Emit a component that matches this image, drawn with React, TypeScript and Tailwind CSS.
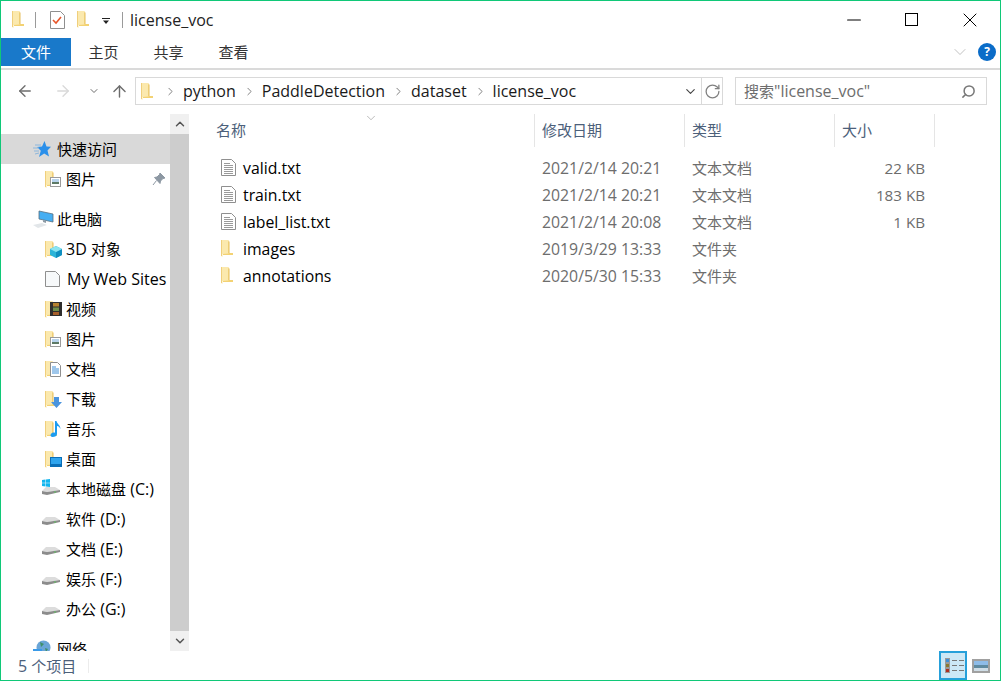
import { ArrowLeft, ArrowRight, ArrowUp, ChevronDown, ChevronRight, ChevronUp, RotateCw, Search, Minus, X } from 'lucide-react'

const font = { fontFamily: '"Open Sans", "Noto Sans CJK SC", sans-serif' }

// CJK runs look smaller than latin in the reference, so they get their own size
const Mixed = ({ text }: { text: string }) => (
  <>
    {text.split(/([\u4e00-\u9fff]+)/).filter(Boolean).map((part, i) => (
      <span key={i} className={/[\u4e00-\u9fff]/.test(part) ? 'text-[15px]' : 'text-[16px]'}>{part}</span>
    ))}
  </>
)

const FolderIcon = ({ className = '' }: { className?: string }) => (
  <svg width="12" height="17" viewBox="0 0 12 17" className={className}>
    <path d="M1 0h6l1 1.500V13h4v2H2z" fill="#f3d273" />
    <path d="M0 0h7.500v13.500L1.500 14 1.500 17 0 16z" fill="#fbe9ae" />
    <path d="M0 0h1v16H0z" fill="#f0cf7c" />
    <path d="M7.500 1.500h1V13h-1z" fill="#e6bd5c" />
  </svg>
)

const TextFileIcon = () => (
  <svg width="15" height="17" viewBox="0 0 15 17">
    <path d="M.5.500h10l4 4v12H.5z" fill="#fff" stroke="#8f8f8f" />
    <path d="M3 4.500h6M3 6.500h9M3 8.500h9M3 10.500h9M3 12.500h9M3 14.500h9" stroke="#9a9a9a" />
  </svg>
)

const Overlay = ({ type }: { type: string }) => {
  if (type === 'pictures')
    return (
      <svg width="11" height="10" viewBox="0 0 11 10" className="absolute left-[5px] top-[6px]">
        <rect x=".5" y=".5" width="10" height="9" fill="#fff" stroke="#9b9b9b" />
        <rect x="2" y="2" width="7" height="3" fill="#b9d4ee" />
        <rect x="2" y="5" width="7" height="2" fill="#5d7a66" />
      </svg>
    )
  if (type === 'video')
    return (
      <svg width="12" height="14" viewBox="0 0 12 14" className="absolute left-[5px] top-[1px]">
        <rect width="12" height="14" fill="#2e2e2e" />
        <rect x="3" y="1" width="6" height="3.500" fill="#b5812f" />
        <rect x="3" y="5.500" width="6" height="3.500" fill="#6f8f4a" />
        <rect x="3" y="10" width="6" height="3" fill="#a65f2b" />
      </svg>
    )
  if (type === 'docs')
    return (
      <svg width="11" height="15" viewBox="0 0 11 15" className="absolute left-[5px] top-[1px]">
        <path d="M.5.500h7l3 3v11H.5z" fill="#fff" stroke="#8f8f8f" />
        <path d="M2 5h4M2 7h7M2 9h7M2 11h7" stroke="#3f8fd8" />
      </svg>
    )
  if (type === 'download')
    return (
      <svg width="11" height="11" viewBox="0 0 11 11" className="absolute left-[6px] top-[6px]">
        <path d="M3 0h5v5h3l-5.500 6L0 5h3z" fill="#4a94de" />
      </svg>
    )
  if (type === 'music')
    return (
      <svg width="11" height="16" viewBox="0 0 11 16" className="absolute left-[5px] top-0">
        <path d="M5 0h1.500c.5 3 4 4 4 8-1-2-2-3-3.500-3v8c0 2-2 3-4.500 3C0 16 0 13 2 12c1-.5 2-.5 3-.2z" fill="#1c9cf0" />
      </svg>
    )
  if (type === 'desktop')
    return (
      <svg width="12" height="10" viewBox="0 0 12 10" className="absolute left-[5px] top-[6px]">
        <rect width="12" height="10" fill="#0a6fb8" />
        <rect x="1" y="1" width="10" height="6" fill="#2ea4ee" />
      </svg>
    )
  if (type === '3d')
    return (
      <svg width="12" height="12" viewBox="0 0 12 12" className="absolute left-[5px] top-[5px]">
        <path d="M6 0l6 3v6l-6 3-6-3V3z" fill="#2bb4d8" />
        <path d="M6 6l6-3v6l-6 3z" fill="#0f8fc0" />
        <path d="M6 0l6 3-6 3-6-3z" fill="#8be4f0" />
      </svg>
    )
  return null
}

const DriveIcon = ({ win = false }: { win?: boolean }) => (
  <span className="relative block h-4 w-[18px]">
    {win && (
      <svg width="8" height="8" viewBox="0 0 8 8" className="absolute -top-[2px] left-0">
        <path d="M0 1l3.500-.5V3.700H0zM4 .4L8 0v3.700H4zM0 4.200h3.500v3.300L0 7zM4 4.200h4V8l-4-.5z" fill="#12b5ee" />
      </svg>
    )}
    <svg width="18" height="10" viewBox="0 0 18 10" className="absolute left-0 top-[5px]">
      <path d="M0 5l4-4h9l5 3-13 2z" fill="#dcdcdc" />
      <path d="M0 5l5 1 13-2v2L5 9 0 8z" fill="#8c8c8c" />
      <rect x="12" y="5.500" width="2" height="1" fill="#5cbf5c" />
    </svg>
  </span>
)

const NavRow = ({ label, indent = 44, gap = 'ml-[5px]', icon, selected = false, pin = false }: { label: string; indent?: number; gap?: string; icon: React.ReactNode; selected?: boolean; pin?: boolean }) => (
  <div className={`relative flex h-[30px] items-center ${selected ? 'bg-[#d9d9d9]' : ''}`} style={{ paddingLeft: indent }}>
    <span className="relative flex h-4 w-[17px] shrink-0 items-center">{icon}</span>
    <span className={`whitespace-nowrap text-black ${gap}`}><Mixed text={label} /></span>
    {pin && (
      <svg width="14" height="14" viewBox="0 0 14 14" className="absolute left-[151px] top-[8px]">
        <path d="M8 1l5 5-2 .5-2.500 2.500-.5 2.500L2.500 5.500 5 5l2.500-2.500zM4.500 8.500L1 13" fill="#8d98a3" stroke="#8d98a3" />
      </svg>
    )}
  </div>
)

const LibRow = ({ label, type, pin }: { label: string; type: string; pin?: boolean }) => (
  <NavRow label={label} pin={pin} gap="ml-[4px]" icon={<><FolderIcon /><Overlay type={type} /></>} />
)

const DriveRow = ({ label, win }: { label: string; win?: boolean }) => (
  <NavRow label={label} indent={41} gap="ml-[7px]" icon={<DriveIcon win={win} />} />
)

const files = [
  { name: 'valid.txt', date: '2021/2/14 20:21', type: '文本文档', size: '22 KB' },
  { name: 'train.txt', date: '2021/2/14 20:21', type: '文本文档', size: '183 KB' },
  { name: 'label_list.txt', date: '2021/2/14 20:08', type: '文本文档', size: '1 KB' },
  { name: 'images', date: '2019/3/29 13:33', type: '文件夹', size: '', folder: true },
  { name: 'annotations', date: '2020/5/30 15:33', type: '文件夹', size: '', folder: true },
]

const Crumb = ({ label }: { label: string }) => (
  <>
    <ChevronRight className="ml-[7px] mr-[6px] h-[13px] w-[13px] text-[#666]" strokeWidth={1.5} />
    <span className="text-[16px] text-[#1a1a1a]">{label}</span>
  </>
)

export default function App() {
  return (
    <div style={font} className="flex h-[681px] w-[1001px] flex-col overflow-hidden border border-[#10c878] bg-white">
      {/* title bar */}
      <div className="flex h-[37px] shrink-0 items-center pl-[11px]">
        <FolderIcon />
        <div className="ml-[11px] h-4 w-px bg-[#9a9a9a]" />
        <svg width="15" height="18" viewBox="0 0 15 18" className="ml-[14px]">
          <path d="M.5.500h10l4 4v13H.5z" fill="#fff" stroke="#8f8f8f" />
          <path d="M3 9l3 3 5-6" fill="none" stroke="#e8562a" strokeWidth="1.600" />
        </svg>
        <FolderIcon className="ml-[12px]" />
        <svg width="8" height="6" viewBox="0 0 8 6" className="ml-[13px] mt-[3px]">
          <path d="M0 0h8v1H0zM1 2.500h6L4 6z" fill="#222" />
        </svg>
        <div className="ml-[12px] h-4 w-px bg-[#9a9a9a]" />
        <span className="ml-[7px] text-[16px] text-[#222]">license_voc</span>
        <div className="ml-auto flex h-full items-center">
          <div className="flex w-[60px] justify-center pl-[3px]"><Minus className="h-[22px] w-[22px] text-black" strokeWidth={1.100} /></div>
          <div className="flex w-[58px] justify-center"><div className="h-[13px] w-[13px] border border-black" /></div>
          <div className="flex w-[60px] justify-center"><X className="h-[24px] w-[24px] text-black" strokeWidth={1} /></div>
        </div>
      </div>

      {/* ribbon tabs */}
      <div className="flex h-[32px] shrink-0 border-b-2 border-[#dadada] pb-[3px] text-[15px] text-[#333]">
        <div className="flex h-[28px] w-[70px] items-center justify-center bg-[#1979ca] text-white">文件</div>
        <div className="flex h-[28px] w-[65px] items-center justify-center">主页</div>
        <div className="flex h-[28px] w-[65px] items-center justify-center">共享</div>
        <div className="flex h-[28px] w-[65px] items-center justify-center">查看</div>
        <div className="ml-auto flex h-[28px] items-center pr-[4px]">
          <ChevronDown className="mr-[8px] h-[20px] w-[20px] text-[#b5b5b5]" strokeWidth={1} />
          <div className="flex h-[18px] w-[18px] items-center justify-center rounded-full bg-[#0a6cc8] text-[12px] font-bold text-white">?</div>
        </div>
      </div>

      {/* address row */}
      <div className="flex h-[41px] shrink-0 items-center pt-[1px]">
        <ArrowLeft className="ml-[15px] h-[18px] w-[18px] text-[#6d6d6d]" strokeWidth={1.800} />
        <ArrowRight className="ml-[20px] h-[18px] w-[18px] text-[#d9d9d9]" strokeWidth={1.800} />
        <ChevronDown className="ml-[16px] h-[12px] w-[12px] text-[#6d6d6d]" strokeWidth={2} />
        <ArrowUp className="ml-[10px] h-[19px] w-[19px] text-[#6d6d6d]" strokeWidth={1.800} />
        <div className="ml-[6px] flex h-[28px] w-[588px] items-center border border-[#d9d9d9] pl-[5px]">
          <FolderIcon />
          <span className="w-[4px]" />
          <Crumb label="python" />
          <Crumb label="PaddleDetection" />
          <Crumb label="dataset" />
          <Crumb label="license_voc" />
          <ChevronDown className="ml-auto mr-[3px] h-[15px] w-[15px] text-[#444]" strokeWidth={1.800} />
          <div className="flex h-full w-[21px] items-center justify-center border-l border-[#d9d9d9]">
            <RotateCw className="h-[17px] w-[17px] text-[#808080]" strokeWidth={1.800} />
          </div>
        </div>
        <div className="ml-[12px] flex h-[28px] w-[252px] items-center border border-[#d9d9d9] pl-[8px] pr-[10px] text-[#6d6d6d]">
          <span><Mixed text={'搜索"license_voc"'} /></span>
          <Search className="ml-auto h-[15px] w-[15px] -scale-x-100 text-[#777]" strokeWidth={2.400} />
        </div>
      </div>

      {/* body */}
      <div className="flex min-h-0 flex-1">
        {/* nav pane */}
        <div className="flex w-[188px] shrink-0 pt-[3px]">
          <div className="h-[537px] w-[169px] shrink-0 overflow-hidden pt-[20px]">
            <NavRow
              label="快速访问"
              indent={32}
              gap="ml-[7px]"
              selected
              icon={
                <svg width="18" height="17" viewBox="0 0 18 17" className="shrink-0">
                  <path d="M11.500 0l2 5.500 4.500.3-3.500 3.700 1.500 6-4.800-3-5.200 3.500 1.800-6.300L4 6l5-.5z" fill="#2b90ea" />
                  <path d="M2 4h6M0 7h6M1 10h5M2 13l4-1" stroke="#8db7dc" />
                </svg>
              }
            />
            <LibRow label="图片" type="pictures" pin />
            <div className="h-[10px]" />
            <NavRow
              label="此电脑"
              indent={32}
              gap="ml-[7px]"
              icon={
                <svg width="21" height="18" viewBox="0 0 21 18" className="shrink-0">
                  <path d="M6 1l14 3v8L6 9z" fill="#45aef2" stroke="#59707f" strokeWidth=".8" />
                  <path d="M10 10l3 1v2l-3-1z" fill="#8e9aa4" />
                  <path d="M0 15l9-2 5 2-9 3z" fill="#e2e6e9" />
                </svg>
              }
            />
            <LibRow label="3D 对象" type="3d" />
            <NavRow
              label="My Web Sites"
              icon={
                <svg width="15" height="16" viewBox="0 0 15 16" className="shrink-0">
                  <path d="M.5.500h10l4 4v11H.5z" fill="#f7f9fa" stroke="#8f8f8f" />
                </svg>
              }
            />
            <LibRow label="视频" type="video" />
            <LibRow label="图片" type="pictures" />
            <LibRow label="文档" type="docs" />
            <LibRow label="下载" type="download" />
            <LibRow label="音乐" type="music" />
            <LibRow label="桌面" type="desktop" />
            <DriveRow label="本地磁盘 (C:)" win />
            <DriveRow label="软件 (D:)" />
            <DriveRow label="文档 (E:)" />
            <DriveRow label="娱乐 (F:)" />
            <DriveRow label="办公 (G:)" />
            <div className="h-[10px]" />
            <NavRow
              label="网络"
              indent={32}
              gap="ml-[7px]"
              icon={
                <svg width="18" height="18" viewBox="0 0 18 18" className="shrink-0">
                  <circle cx="10.500" cy="7.500" r="7" fill="#6aa5d6" />
                  <path d="M7 2l4 2-3 3zM12 8l3 1-2 3z" fill="#3f8f6a" />
                  <path d="M0 9h9v9H0z" fill="#3a9ae8" />
                </svg>
              }
            />
          </div>
          {/* scrollbar */}
          <div className="flex h-[537px] w-[19px] flex-col bg-[#f0f0f0]">
            <div className="flex h-[20px] items-center justify-center">
              <ChevronUp className="h-[14px] w-[14px] text-[#555]" strokeWidth={2.500} />
            </div>
            <div className="h-[497px] bg-[#cdcdcd]" />
            <div className="flex h-[20px] items-center justify-center">
              <ChevronDown className="h-[14px] w-[14px] text-[#555]" strokeWidth={2.500} />
            </div>
          </div>
        </div>

        {/* file list */}
        <div className="relative min-w-0 flex-1 pt-[3px]">
          <ChevronDown className="absolute left-[175px] top-0 h-[14px] w-[14px] text-[#8a8a8a]" strokeWidth={1} />
          <div className="flex h-[33px] text-[15px] text-[#4c607a]">
            <div className="flex w-[346px] items-center border-r border-[#e5e5e5] pl-[27px]">名称</div>
            <div className="flex w-[150px] items-center border-r border-[#e5e5e5] pl-[7px]">修改日期</div>
            <div className="flex w-[150px] items-center border-r border-[#e5e5e5] pl-[7px]">类型</div>
            <div className="flex w-[100px] items-center border-r border-[#e5e5e5] pl-[7px]">大小</div>
          </div>
          <div className="pt-[7px]">
            {files.map((f) => (
              <div key={f.name} className="flex h-[27px] items-center">
                <div className="flex w-[346px] items-center pl-[32px]">
                  <span className="flex w-[22px] items-center">{f.folder ? <FolderIcon /> : <TextFileIcon />}</span>
                  <span className="pt-[2px] text-[15.800px] text-black">{f.name}</span>
                </div>
                <div className="w-[150px] pl-[7px] pt-[2px] text-[15.800px] text-[#6d6d6d]">{f.date}</div>
                <div className="w-[150px] pl-[7px] pt-[1px] text-[15px] text-[#6d6d6d]">{f.type}</div>
                <div className="w-[90px] pt-[1px] text-right text-[15.200px] text-[#6d6d6d]">{f.size}</div>
              </div>
            ))}
          </div>
        </div>
      </div>

      {/* status bar */}
      <div className="flex h-[28px] shrink-0 items-center pl-[17px] text-[#4c607a]">
        <span><Mixed text="5 个项目" /></span>
        <div className="ml-[12px] h-[14px] w-px bg-[#ececec]" />
        <div className="ml-auto flex h-full items-end pr-[10px]">
          <div className="flex h-[29px] w-[28px] shrink-0 flex-col justify-center border-2 border-[#26a0da] bg-[#cce8f6] pl-[4px]">
            {['#3f8fd8', '#8a7a30', '#b03020'].map((c) => (
              <div key={c} className="flex items-center gap-[2px]">
                <span className="h-[5px] w-[5px] border border-[#9a9a9a]" style={{ backgroundColor: c }} />
                <span className="h-px w-[5px] bg-[#777]" />
                <span className="h-px w-[5px] bg-[#777]" />
              </div>
            ))}
          </div>
          <div className="flex h-[28px] w-[23px] items-center justify-end">
            <svg width="18" height="14" viewBox="0 0 18 14">
              <rect x="1" y="1" width="16" height="12" fill="#fff" stroke="#a0a0a0" strokeWidth="2" />
              <rect x="2" y="2" width="14" height="4" fill="#8ebce8" />
              <rect x="2" y="6" width="14" height="3" fill="#5f8aa0" />
              <rect x="2" y="9" width="14" height="3" fill="#cfdde6" />
            </svg>
          </div>
        </div>
      </div>
    </div>
  )
}
